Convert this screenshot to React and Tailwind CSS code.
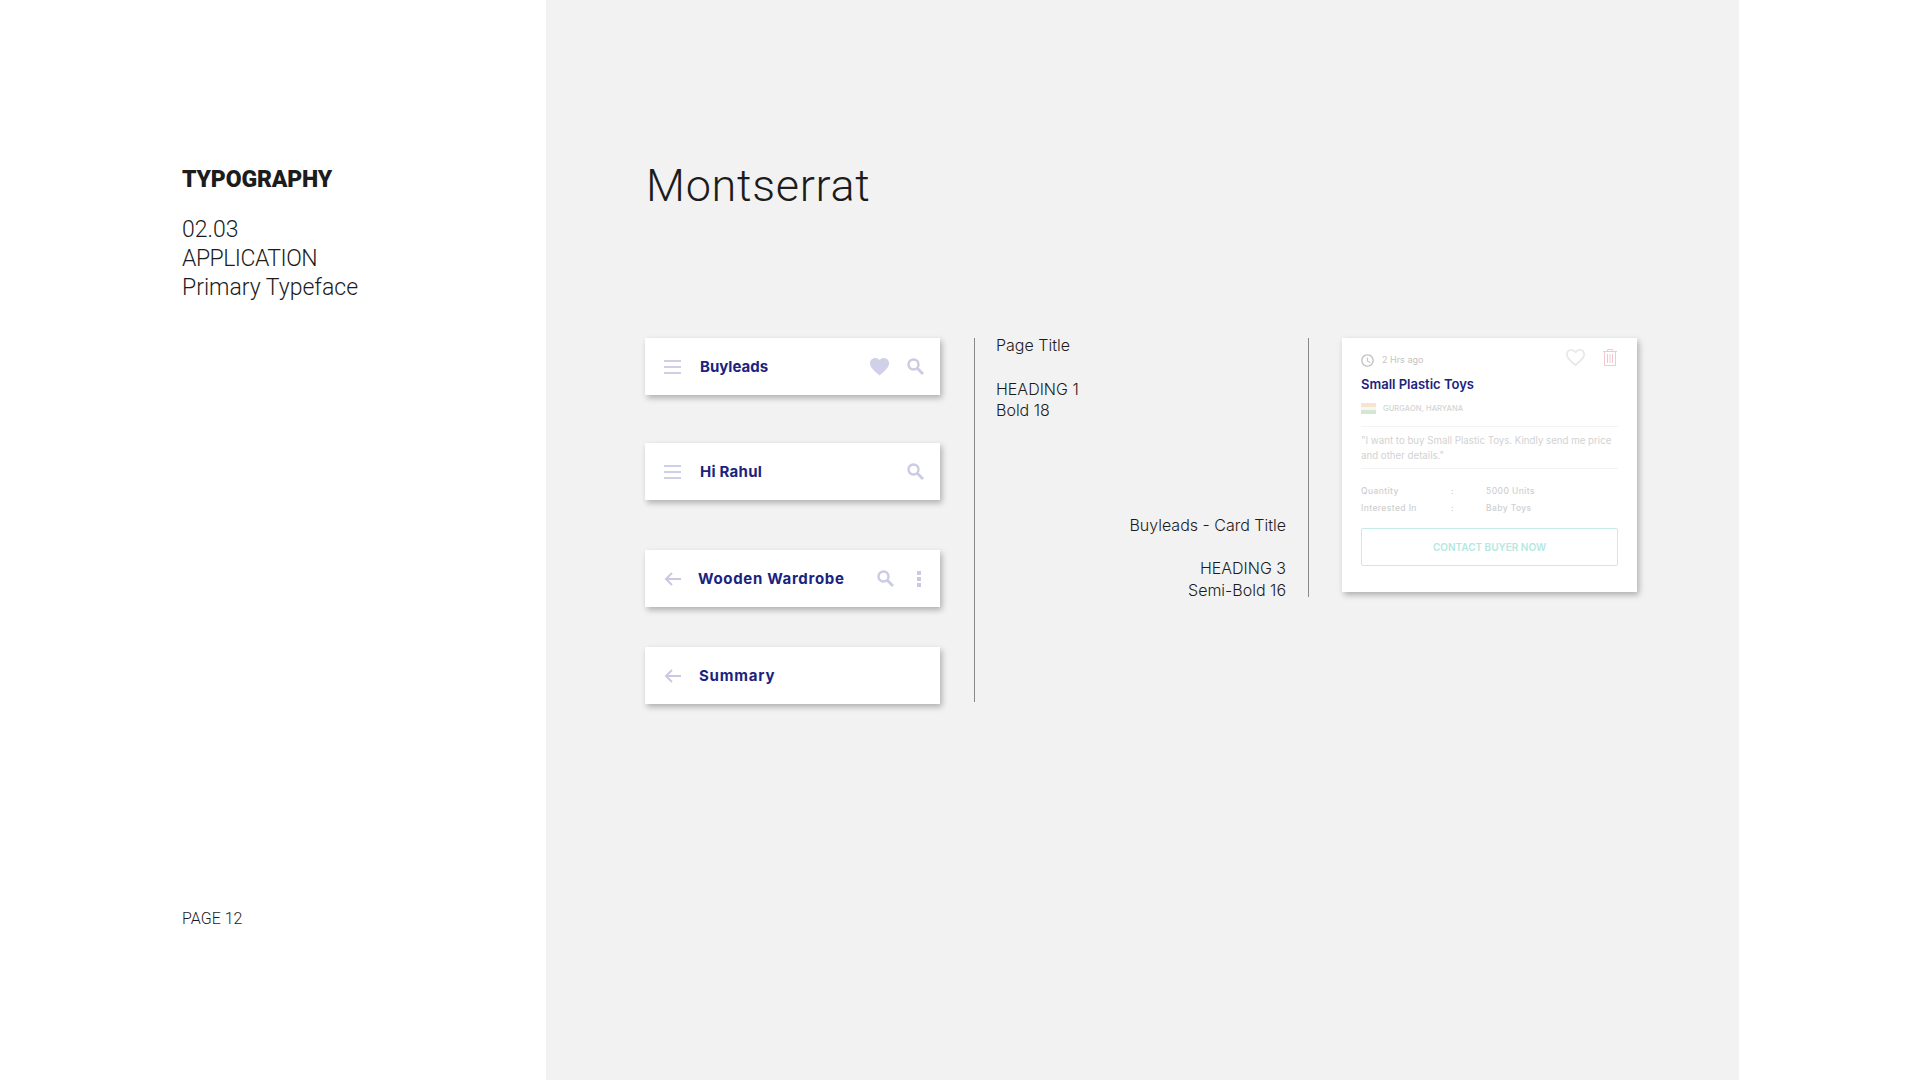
import React from "react";
import { MdFavorite, MdFavoriteBorder, MdAccessTime } from "react-icons/md";

function Hamburger() {
  return (
    <svg width="17" height="14" viewBox="0 0 17 14" className="block">
      <path d="M0 1h17M0 7h17M0 13h17" stroke="#cfcfe8" strokeWidth="2" fill="none" />
    </svg>
  );
}

function BackArrow() {
  return (
    <svg width="17" height="14" viewBox="0 0 17 14" fill="none" stroke="#c9c9e4" strokeWidth="2" className="block">
      <path d="M17 7H2M8 1L2 7l6 6" />
    </svg>
  );
}

function SearchGlyph() {
  return (
    <svg width="17" height="17" viewBox="0 0 17 17" fill="none" stroke="#cbcbe4" className="block">
      <circle cx="6.5" cy="6.5" r="5" strokeWidth="2.4" />
      <path d="M10.5 10.5L16 16" strokeWidth="2.8" />
    </svg>
  );
}

function Dots() {
  return (
    <svg width="4" height="16" viewBox="0 0 4 16" fill="#c9c9e4" className="block">
      <rect width="4" height="4" />
      <rect y="6" width="4" height="4" />
      <rect y="12" width="4" height="4" />
    </svg>
  );
}

function Trash() {
  return (
    <svg width="14" height="17" viewBox="0 0 14 17" fill="none" stroke="#f5c6cb" strokeWidth="1">
      <path d="M0 2.5h14M4.5 2.5V.5h5v2M1.5 2.5v14h11v-14M4.5 5v9M7 5v9M9.5 5v9" />
    </svg>
  );
}

function AppBar({ title, back, heart, search, more, className, titleClass }) {
  return (
    <div className={`flex h-[57px] w-[295px] items-center bg-white shadow-[2px_3px_6px_rgba(0,0,0,0.28)] ${className || ""}`}>
      <div className="w-[55px] shrink-0 pl-[19px]">
        {back ? <BackArrow /> : <Hamburger />}
      </div>
      <span className={`mt-[1px] font-['Inter'] text-[15px] font-bold text-[#1a237e] ${titleClass || ""}`}>{title}</span>
      <div className="ml-auto flex items-center pr-[16px]">
        {heart && <MdFavorite size={23} color="#d0d0e8" className="mr-[16px]" />}
        {search && <SearchGlyph />}
        {more && <div className="ml-[23px] mr-[3px]"><Dots /></div>}
      </div>
    </div>
  );
}

function Row({ label, value }) {
  return (
    <div className="flex text-[8.5px] font-medium tracking-[0.4px] text-[#cfcfcf]">
      <span className="w-[90px]">{label}</span>
      <span className="w-[35px]">:</span>
      <span>{value}</span>
    </div>
  );
}

export default function App() {
  return (
    <div className="flex h-[1080px] w-[1920px] overflow-hidden bg-white font-['Roboto',sans-serif] text-[#1c1c1c]">
      <aside className="flex w-[546px] shrink-0 flex-col pl-[182px] pt-[166px]">
        <h1 className="text-[23px] font-black leading-[28px] tracking-[-0.15px]">TYPOGRAPHY</h1>
        <div className="mt-[21px] text-[23px] font-light leading-[29px]">
          <div>02.03</div>
          <div className="tracking-[-0.5px]">APPLICATION</div>
          <div>Primary Typeface</div>
        </div>
        <div className="mt-[605px] text-[16px] font-light">PAGE 12</div>
      </aside>

      <main className="w-[1193px] shrink-0 bg-[#f2f2f2] pl-[99px] pt-[156px]">
        <h2 className="ml-[1px] text-[45px] font-light leading-[60px] tracking-[0.7px]">Montserrat</h2>

        <div className="mt-[122px] flex items-start">
          <div className="flex w-[330px] shrink-0 flex-col border-r border-[#8a8a8a]">
            <AppBar title="Buyleads" heart search />
            <AppBar title="Hi Rahul" search className="mt-[48px]" titleClass="tracking-[0.25px]" />
            <AppBar title="Wooden Wardrobe" back search more className="mt-[50px]" titleClass="-ml-[2px] tracking-[0.67px]" />
            <AppBar title="Summary" back className="mt-[40px] mb-[-2px]" titleClass="-ml-[1px] tracking-[0.8px]" />
          </div>

          <div className="flex h-[259px] w-[334px] shrink-0 flex-col justify-between border-r border-[#8a8a8a] pl-[21px] pr-[22px] font-['Inter'] text-[16px] font-light leading-[21.5px]">
            <div>
              <div className="-mt-[3px]">Page Title</div>
              <div className="mt-[22px]">HEADING 1</div>
              <div>Bold 18</div>
            </div>
            <div className="mb-[-4px] text-right">
              <div>Buyleads - Card Title</div>
              <div className="mt-[22px]">HEADING 3</div>
              <div>Semi-Bold 16</div>
            </div>
          </div>

          <div className="ml-[33px] h-[254px] w-[295px] shrink-0 bg-white pl-[19px] pr-[19px] pt-[12px] font-['Inter'] shadow-[2px_3px_6px_rgba(0,0,0,0.28)]">
            <div className="flex h-[20px] items-center">
              <MdAccessTime size={15} color="#bdbdbd" className="-ml-[1px]" />
              <span className="ml-[7px] text-[9px] text-[#c4c4c4]">2 Hrs ago</span>
              <MdFavoriteBorder size={23} color="#e9e9e9" className="ml-auto -mt-[5px]" />
              <div className="-mt-[5px] ml-[16px] mr-[1px]"><Trash /></div>
            </div>
            <div className="mt-[5px] text-[13px] font-semibold leading-[18px] text-[#1a237e]">Small Plastic Toys</div>
            <div className="mt-[10px] flex items-center">
              <div className="flex h-[11px] w-[15px] flex-col">
                <div className="h-1/3 bg-[#f8e3cf]" />
                <div className="h-1/3 bg-[#f6f6f6]" />
                <div className="h-1/3 bg-[#d3e8d3]" />
              </div>
              <span className="ml-[7px] text-[7.5px] font-medium tracking-[0.1px] text-[#d4d4d4]">GURGAON, HARYANA</span>
            </div>
            <div className="mt-[12px] whitespace-nowrap border-t border-[#f3f3f3] pt-[6px] text-[9.7px] leading-[15px] text-[#d2d2d2]">
              "I want to buy Small Plastic Toys. Kindly send me price<br />and other details."
            </div>
            <div className="mt-[5px] flex flex-col gap-[6px] border-t border-[#f3f3f3] pt-[17px] leading-[11px]">
              <Row label="Quantity" value="5000 Units" />
              <Row label="Interested In" value="Baby Toys" />
            </div>
            <div className="mt-[14px] flex h-[38px] w-[257px] items-center justify-center rounded-[2px] border border-[#c5ece6] text-[10px] font-semibold text-[#b4e8df]">
              CONTACT BUYER NOW
            </div>
          </div>
        </div>
      </main>

      <div className="flex-1 bg-white" />
    </div>
  );
}
